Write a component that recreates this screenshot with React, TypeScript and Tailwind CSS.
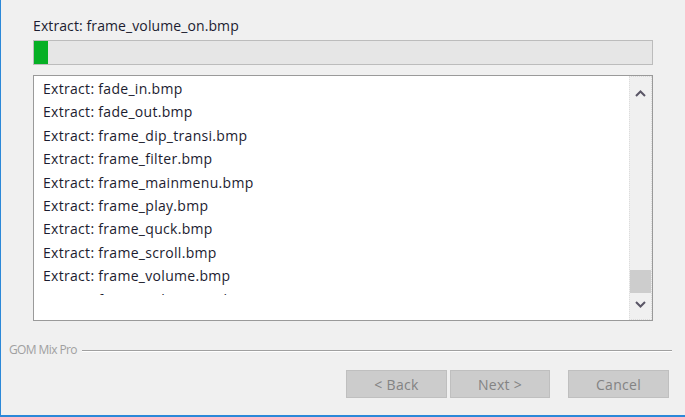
import React from 'react'

const FILES = [
  'fade_in.bmp',
  'fade_out.bmp',
  'frame_dip_transi.bmp',
  'frame_filter.bmp',
  'frame_mainmenu.bmp',
  'frame_play.bmp',
  'frame_quck.bmp',
  'frame_scroll.bmp',
  'frame_volume.bmp',
  'frame_volume_on.bmp',
]

function Chevron({ up }: { up?: boolean }) {
  return (
    <svg width="11" height="7" viewBox="0 0 11 7">
      <path
        d={up ? 'M1 6 L5.5 1.5 L10 6' : 'M1 1 L5.5 5.5 L10 1'}
        fill="none"
        stroke="#5a5666"
        strokeWidth="2"
      />
    </svg>
  )
}

export default function App() {
  return (
    <div
      className="w-[685px] h-[417px] bg-[#f0f0f0] border-l border-l-[#2b88d8] border-b-2 border-b-[#2b88d8] flex flex-col text-[14px] tracking-[0.3px] text-[#1c1c30]"
      style={{ fontFamily: '"Open Sans", "Noto Sans", sans-serif' }}
    >
      {/* Top: status + progress + log */}
      <div className="pl-[32px] pt-[17px]">
        <div className="leading-[18px] h-[18px] tracking-[0.1px]">Extract: frame_volume_on.bmp</div>
        <div className="mt-[5px] w-[620px] h-[25px] border border-[#bcbcbc] bg-[#e6e6e6]">
          <div className="w-[14px] h-full bg-[#06b025]" />
        </div>
        <div className="mt-[10px] w-[620px] h-[246px] border border-[#9a9a9a] bg-white flex">
          <div className="flex-1 pl-[9px] pt-[1px]">
            <div className="h-[218px] overflow-hidden">
              {FILES.map(f => (
                <div key={f} className="h-[23.4px] leading-[23.4px] whitespace-nowrap">
                  Extract: {f}
                </div>
              ))}
            </div>
          </div>
          <div className="w-[23px] bg-[#f0f0f0] border border-dotted border-[#dcdcdc] flex flex-col items-center">
            <div className="h-[30px] flex items-center justify-center pt-[2px]">
              <Chevron up />
            </div>
            <div className="flex-1 flex flex-col justify-end w-full">
              <div className="h-[23px] w-full bg-[#cdcdcd]" />
            </div>
            <div className="h-[26px] flex items-center justify-center pb-[4px]">
              <Chevron />
            </div>
          </div>
        </div>
      </div>

      {/* Footer brand line */}
      <div className="mt-[20px] pl-[8px] pr-[13px] flex items-center gap-[5px]">
        <span className="text-[#a0a0a0] text-[12px] tracking-[-0.6px] leading-[18px] whitespace-nowrap">GOM Mix Pro</span>
        <div className="flex-1 h-[2px] border-t border-[#a0a0a0] border-b border-b-white mt-[1px]" />
      </div>

      {/* Buttons */}
      <div className="mt-[11px] pr-[16px] flex justify-end">
        <button className="w-[101px] h-[28px] bg-[#cccccc] border border-[#bfbfbf] text-[#838383] tracking-[0.3px]">
          &lt; Back
        </button>
        <button className="ml-[3px] w-[100px] h-[28px] bg-[#cccccc] border border-[#bfbfbf] text-[#838383] tracking-[0.3px]">
          Next &gt;
        </button>
        <button className="ml-[18px] w-[101px] h-[28px] bg-[#cccccc] border border-[#bfbfbf] text-[#838383] tracking-[0.3px]">
          Cancel
        </button>
      </div>
    </div>
  )
}
